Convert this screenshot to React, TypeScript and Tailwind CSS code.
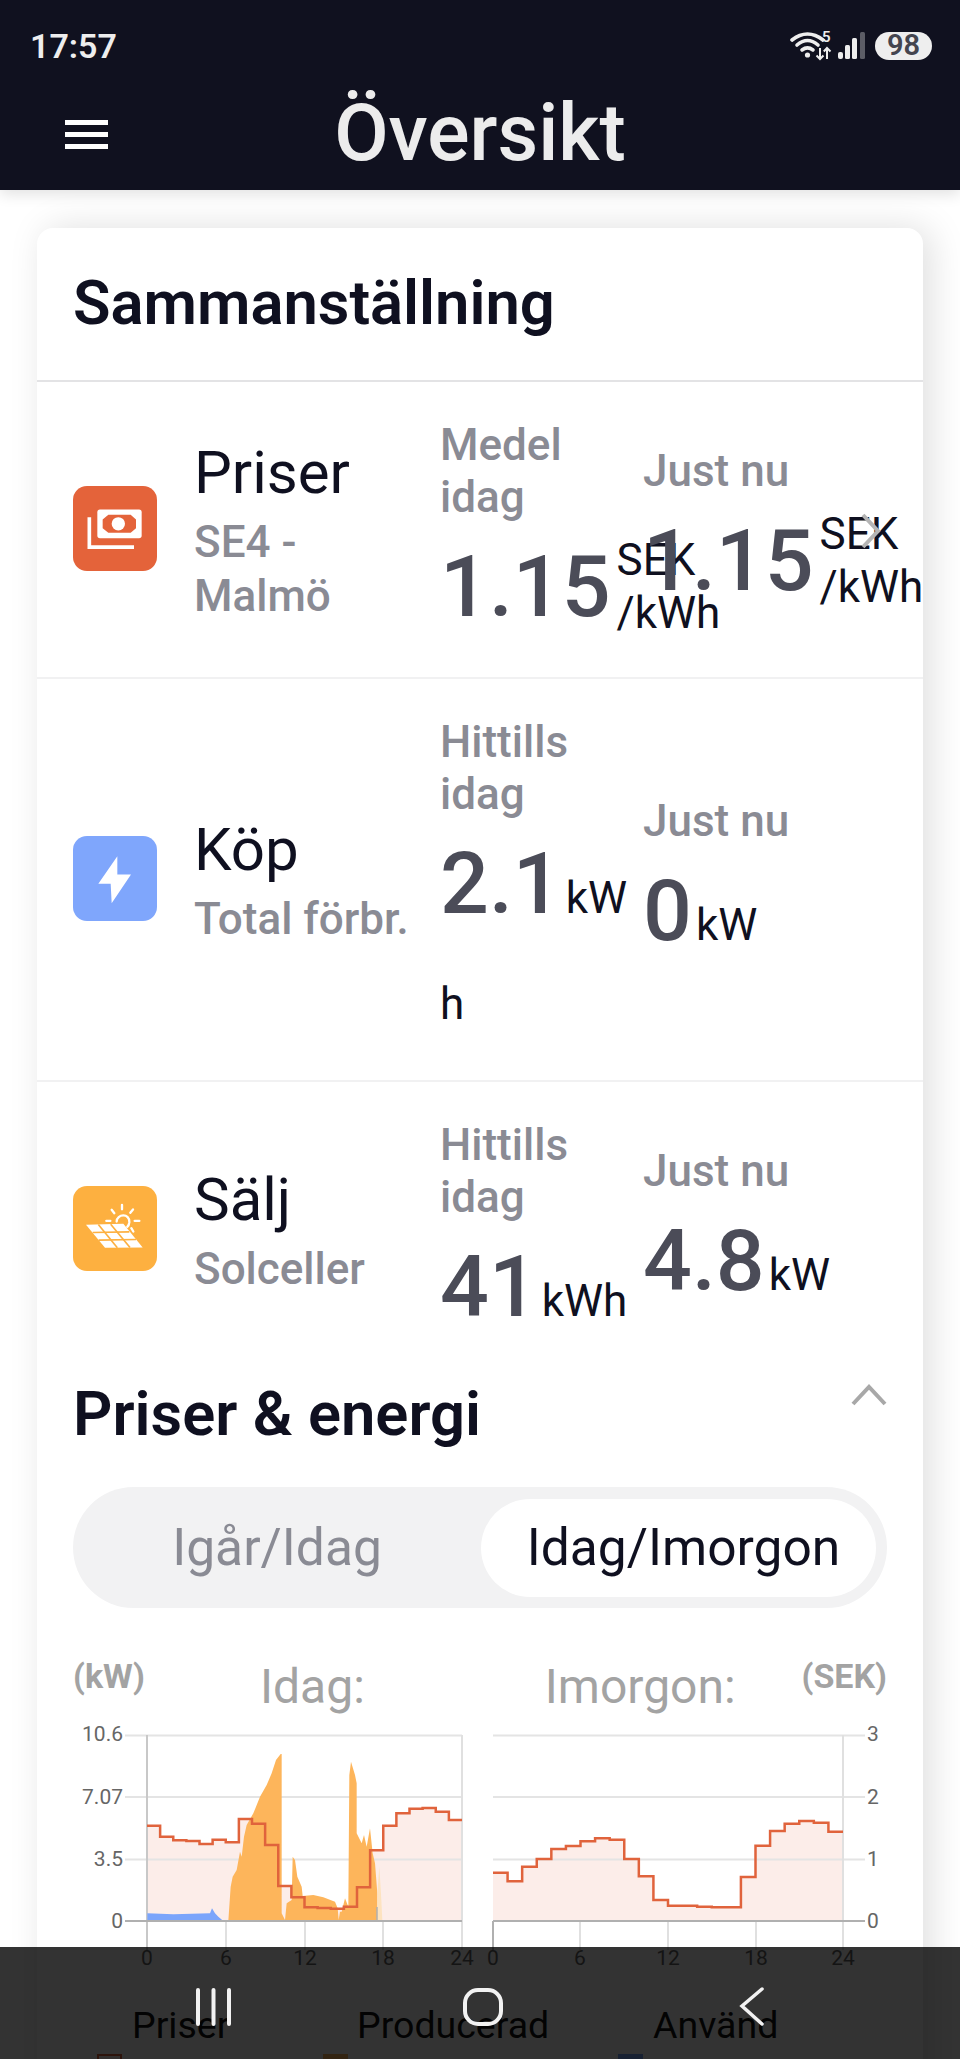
import React from "react";

const roboto = "font-['Roboto','Liberation_Sans',sans-serif]";

// chart points are read off the reference, in px of the plot
const leftPrices = [497, 530, 541, 543, 552, 539, 547, 477, 491, 555, 678, 712, 742, 744, 746, 740, 682, 571, 497, 460, 446, 444, 455, 480];
const rightPrices = [638, 664, 620, 597, 567, 558, 544, 535, 539, 597, 649, 720, 737, 737, 740, 742, 742, 651, 557, 513, 491, 483, 488, 515];

const orangeArea = [
  [565, 783], [572, 680], [578, 650], [590, 630], [600, 575], [605, 590], [612, 530], [620, 495], [640, 460], [660, 410], [680, 375], [695, 340], [708, 300], [722, 282], [725, 282], [725, 760], [735, 780], [740, 730], [755, 720], [758, 590], [765, 600], [772, 650], [785, 680], [788, 708], [820, 705], [850, 712], [885, 725], [893, 745], [896, 780], [900, 755], [905, 755], [915, 715], [925, 740], [928, 345], [933, 305], [945, 345], [950, 370], [950, 520], [965, 550], [972, 525], [980, 560], [990, 505], [998, 580], [1005, 610], [1012, 700], [1012, 783],
];
const blueArea = [[322, 760], [400, 763], [510, 760], [516, 745], [525, 760], [535, 770], [550, 783], [322, 783]];

const toPageY = (y: number) => 1660 + y / 3;
const toPageX = (x: number) => 40 + x / 3;

const stepLine = (values: number[], x0: number, x1: number) => {
  const w = (x1 - x0) / values.length;
  let d = "";
  values.forEach((v, i) => {
    d += `${i === 0 ? "M" : "L"}${x0 + i * w} ${toPageY(v)} L${x0 + (i + 1) * w} ${toPageY(v)} `;
  });
  return d;
};

const poly = (pts: number[][]) => pts.map(([x, y]) => `${toPageX(x)},${toPageY(y)}`).join(" ");

const gridYs = [1735.5, 1797, 1859.5];

const XLabels = ({ xs }: { xs: number[] }) => (
  <>
    {xs.map((x, i) => (
      <text key={x} x={x} y={1965} textAnchor="middle" fontSize="21" fill="#666">
        {i * 6}
      </text>
    ))}
  </>
);

const LeftChart = () => {
  const xs = [147, 226, 305, 383, 462];
  const line = stepLine(leftPrices, 147, 462);
  return (
    <svg width="407" height="250" viewBox="73 1725 407 250" className={`${roboto} shrink-0`}>
      <path d={`${line} L462 1921 L147 1921 Z`} fill="#fcede9" />
      {gridYs.map((y) => (
        <line key={y} x1="125" x2="462" y1={y} y2={y} stroke="#e4e4e4" strokeWidth="2" />
      ))}
      {xs.map((x, i) => (
        <line key={x} x1={x} x2={x} y1={i === 0 || i === 4 ? 1735 : 1921} y2="1950" stroke={i === 0 ? "#c8c8c8" : "#e0e0e0"} strokeWidth="2" />
      ))}
      <polygon points={poly(orangeArea)} fill="#fdb55b" />
      <polygon points={poly([[1012, 783], [1012, 700], [1018, 620], [1024, 720], [1027, 783]])} fill="#fde3c0" />
      <polygon points={poly(blueArea)} fill="#7ba5fb" />
      <line x1="377" x2="377" y1="1907" y2="1921" stroke="#b0b0b0" strokeWidth="1.5" />
      <line x1="125" x2="462" y1="1921" y2="1921" stroke="#b0b0b0" strokeWidth="2" />
      <path d={line} fill="none" stroke="#e0633c" strokeWidth="2.5" />
      {[["10.6", 1741], ["7.07", 1804], ["3.5", 1866], ["0", 1928]].map(([t, y]) => (
        <text key={t} x="123" y={y} textAnchor="end" fontSize="21" fill="#666">
          {t}
        </text>
      ))}
      <XLabels xs={xs} />
    </svg>
  );
};

const RightChart = () => {
  const xs = [493, 580, 668, 756, 843];
  const line = stepLine(rightPrices, 493, 843);
  return (
    <svg width="410" height="250" viewBox="480 1725 410 250" className={`${roboto} shrink-0`}>
      <path d={`${line} L843 1921 L493 1921 Z`} fill="#fcede9" />
      {gridYs.map((y) => (
        <line key={y} x1="493" x2="865" y1={y} y2={y} stroke="#e4e4e4" strokeWidth="2" />
      ))}
      {xs.map((x, i) => (
        <line key={x} x1={x} x2={x} y1={i === 4 ? 1735 : 1921} y2="1950" stroke={i === 0 ? "#b0b0b0" : "#e0e0e0"} strokeWidth="2" />
      ))}
      <line x1="493" x2="865" y1="1921" y2="1921" stroke="#b0b0b0" strokeWidth="2" />
      <path d={line} fill="none" stroke="#e0633c" strokeWidth="2.5" />
      {[["3", 1741], ["2", 1804], ["1", 1866], ["0", 1928]].map(([t, y]) => (
        <text key={t} x="867" y={y} fontSize="21" fill="#666">
          {t}
        </text>
      ))}
      <XLabels xs={xs} />
    </svg>
  );
};

const MoneyIcon = () => (
  <svg viewBox="39 53 252 252" className="mb-[2px] h-[85px] w-[84px] shrink-0 rounded-[14px] bg-[#e4633a]">
    <path d="M88 145V235H222" fill="none" stroke="#fff" strokeWidth="11" />
    <rect x="112" y="122" width="133" height="86" rx="8" fill="#fff" />
    <polygon points="145,138 212,138 228,152 228,178 212,192 145,192 128,178 128,152" fill="#e4633a" />
    <circle cx="175" cy="165" r="20" fill="#fff" />
  </svg>
);

const BoltIcon = () => (
  <svg viewBox="39 38 252 252" className="mb-[2px] h-[85px] w-[84px] shrink-0 rounded-[14px] bg-[#7fa6fc]">
    <polygon points="172,97 115,180 152,180 155,238 213,152 172,152" fill="#fff" />
  </svg>
);

const SolarIcon = () => (
  <svg viewBox="39 53 252 252" className="mb-[2px] h-[85px] w-[84px] shrink-0 rounded-[14px] bg-[#fdb040]">
    <polygon points="78,168 190,165 248,236 135,237" fill="#fff" />
    <g stroke="#fdb040" strokeWidth="5">
      <line x1="115" y1="167" x2="172" y2="237" />
      <line x1="152" y1="166" x2="210" y2="236" />
      <line x1="98" y1="191" x2="208" y2="189" />
      <line x1="116" y1="214" x2="228" y2="212" />
    </g>
    <g fill="none" stroke="#fff" strokeWidth="7" strokeLinecap="round">
      <path d="M170 158C170 135 210 132 208 160C207 170 205 172 202 174" />
      <path d="M186 108V121M155 123L163 133M219 122L211 132M139 156H151M224 156H238M214 178L220 188" />
    </g>
  </svg>
);

const Value = ({ value, unit }: { value: string; unit: string }) => (
  <div className="break-all pt-[11px] text-[86px] leading-[106px] text-[#0f1020]">
    <span className="font-medium text-[#4b4c58]">{value}</span>
    <span className="ml-[4px] text-[44px] leading-none">{unit}</span>
  </div>
);

const PriceValue = () => (
  <div className="mt-[11px] flex h-[106px] items-center">
    <span className="text-[86px] font-medium leading-[106px] text-[#4b4c58]">1.15</span>
    <span className="ml-[6px] text-[44px] leading-[53px] text-[#0f1020]">
      SEK
      <br />
      /kWh
    </span>
  </div>
);

const Stat = ({ label, children, w }: { label: React.ReactNode; children: React.ReactNode; w: string }) => (
  <div className={`${w} shrink-0`}>
    <div className="text-[44px] font-medium leading-[52px] text-[#8a8b94]">{label}</div>
    {children}
  </div>
);

const Row = ({ icon, title, sub, children, last }: { icon: React.ReactNode; title: string; sub: string; children: React.ReactNode; last?: boolean }) => (
  <div className={`flex items-center py-[37px] pl-[36px] ${last ? "" : "border-b-2 border-[#f1f1f2]"}`}>
    {icon}
    <div className="mb-[6px] ml-[37px] mr-[21px] w-[225px] shrink-0">
      <div className="text-[60px] leading-[84px] text-[#0f1020]">{title}</div>
      <div className="text-[44px] font-medium leading-[54px] text-[#8a8b94]">{sub}</div>
    </div>
    {children}
  </div>
);

const StatusIcons = () => (
  <div className="flex items-center">
    <svg width="46" height="30" viewBox="0 0 46 30" className="text-[#eee]">
      <g fill="none" stroke="currentColor" strokeWidth="3.6" strokeLinecap="round">
        <path d="M2 9C12 1 23 1 33 9" />
        <path d="M7 14C14 8 21 8 28 14" />
        <path d="M12 19C16 16 19 16 23 19" />
      </g>
      <circle cx="17.5" cy="24" r="2.6" fill="currentColor" />
      <path d="M30 17V28M26.5 24.500L30 28L33.500 24.500M37 28V17M33.800 20.500L37 17L40.500 20.500" fill="none" stroke="currentColor" strokeWidth="2" />
    </svg>
    <span className="-ml-[14px] -mt-[17px] w-[14px] text-[15px] font-semibold leading-none text-[#eee]">5</span>
    <svg width="28" height="28" viewBox="0 0 28 28" className="ml-[2px]">
      <rect x="0" y="20" width="5" height="7" rx="2" fill="#eee" />
      <rect x="7" y="13" width="5" height="14" rx="1.5" fill="#eee" />
      <rect x="14" y="6" width="5" height="21" rx="1.5" fill="#eee" />
      <rect x="22" y="0" width="5" height="27" rx="1.5" fill="#5c5d66" />
    </svg>
    <div className="ml-[9px] flex h-[28px] w-[57px] items-center justify-center rounded-full bg-[#eeeeee] text-[29px] font-semibold text-[#44454f]">98</div>
  </div>
);

export default function App() {
  return (
    <div className={`relative h-[2059px] w-[960px] overflow-hidden bg-white ${roboto}`}>
      <header className="relative z-10 h-[190px] bg-[#10111f] shadow-[0_4px_14px_rgba(0,0,0,0.12)]">
        <div className="flex items-center justify-between pl-[30px] pr-[28px] pt-[27px]">
          <span className="text-[34px] font-semibold leading-[38px] text-[#eeeeee]">17:57</span>
          <StatusIcons />
        </div>
        <div className="relative mt-[22px] flex items-center justify-center">
          <div className="absolute left-[65px] top-[33px] flex w-[43px] flex-col gap-[7px]">
            <div className="h-[5px] bg-white" />
            <div className="h-[5px] bg-white" />
            <div className="h-[5px] bg-white" />
          </div>
          <h1 className="text-[79px] font-medium leading-[92px] text-[#ececec]">Översikt</h1>
        </div>
      </header>

      <main className="relative ml-[37px] mt-[38px] w-[886px] rounded-t-[16px] bg-white pb-10 shadow-[8px_0_36px_rgba(0,0,0,0.13)]">
        <div className="flex h-[154px] items-center border-b-2 border-[#e3e3e5] pl-[36px]">
          <h2 className="text-[61.5px] font-semibold leading-none text-[#0f1020]">Sammanställning</h2>
        </div>

        <Row icon={<MoneyIcon />} title="Priser" sub="SE4 - Malmö">
          <Stat w="w-[203px]" label={<>Medel<br />idag</>}>
            <PriceValue />
          </Stat>
          <Stat w="w-[280px]" label="Just nu">
            <PriceValue />
          </Stat>
          <svg width="20" height="36" viewBox="0 0 20 36" className="absolute left-[824px] top-[285px]">
            <path d="M2 2L17 18L2 34" fill="none" stroke="#b5b5b5" strokeWidth="4" />
          </svg>
        </Row>
        <Row icon={<BoltIcon />} title="Köp" sub="Total förbr.">
          <Stat w="w-[203px]" label={<>Hittills<br />idag</>}>
            <Value value="2.1" unit="kWh" />
          </Stat>
          <Stat w="w-[280px]" label="Just nu">
            <Value value="0" unit="kW" />
          </Stat>
        </Row>
        <Row last icon={<SolarIcon />} title="Sälj" sub="Solceller">
          <Stat w="w-[203px]" label={<>Hittills<br />idag</>}>
            <Value value="41" unit="kWh" />
          </Stat>
          <Stat w="w-[280px]" label="Just nu">
            <Value value="4.8" unit="kW" />
          </Stat>
        </Row>

        <section className="px-[36px]">
          <div className="flex items-start justify-between">
            <h2 className="text-[61.5px] font-semibold leading-[74px] text-[#0f1020]">Priser &amp; energi</h2>
            <svg width="36" height="22" viewBox="0 0 36 22" className="mt-[7px]">
              <path d="M2 20L18 3L34 20" fill="none" stroke="#a8a8a8" strokeWidth="4" />
            </svg>
          </div>

          <div className="mt-[36px] flex h-[121px] items-center rounded-full bg-[#f2f2f3] pl-[12px] pr-[11px]">
            <div className="flex-1 pr-[12px] text-center text-[51.5px] leading-none text-[#8a8b94]">Igår/Idag</div>
            <div className="flex h-[98px] w-[395px] items-center justify-center rounded-full bg-white pl-[10px] text-[51.5px] leading-none text-[#0f1020]">
              Idag/Imorgon
            </div>
          </div>

          <div className="mt-[50px] flex h-[67px] items-start">
            <span className="text-[34px] font-bold leading-[36px] text-[#a3a3a3]">(kW)</span>
            <span className="ml-[115px] mt-[3px] text-[48px] leading-[52px] text-[#a3a3a3]">Idag:</span>
            <span className="ml-[180px] mt-[3px] text-[48px] leading-[52px] text-[#a3a3a3]">Imorgon:</span>
            <span className="ml-auto text-[34px] font-bold leading-[36px] text-[#a3a3a3]">(SEK)</span>
          </div>

          <div className="flex w-[817px]">
            <LeftChart />
            <RightChart />
          </div>

          <div className="ml-[24px] mt-[28px] flex text-[37.5px] leading-[44px] text-[#111]">
            <div className="w-[226px]">
              <div className="ml-[35px]">Priser</div>
              <div className="mt-[7px] h-[25px] w-[25px] border-2 border-[#e0633c] bg-[#fcede9]" />
            </div>
            <div className="w-[295px]">
              <div className="ml-[34px]">Producerad</div>
              <div className="mt-[7px] h-[25px] w-[25px] bg-[#fdb55b]" />
            </div>
            <div>
              <div className="ml-[35px]">Använd</div>
              <div className="mt-[7px] h-[25px] w-[25px] bg-[#7ba5fb]" />
            </div>
          </div>
        </section>
      </main>

      <nav className="absolute bottom-0 left-0 z-20 h-[112px] w-full bg-black/80">
        <svg width="960" height="112" viewBox="0 1947 960 112" className="block">
          <g stroke="#f2f2f2" fill="none">
            <path d="M198 1990V2024M213.500 1990V2024M229 1990V2024" strokeWidth="4" strokeLinecap="round" />
            <rect x="465" y="1990" width="36" height="34" rx="13" strokeWidth="4" />
            <path d="M762 1989L742 2006L762 2024" strokeWidth="3.5" strokeLinecap="round" />
          </g>
        </svg>
      </nav>
    </div>
  );
}
